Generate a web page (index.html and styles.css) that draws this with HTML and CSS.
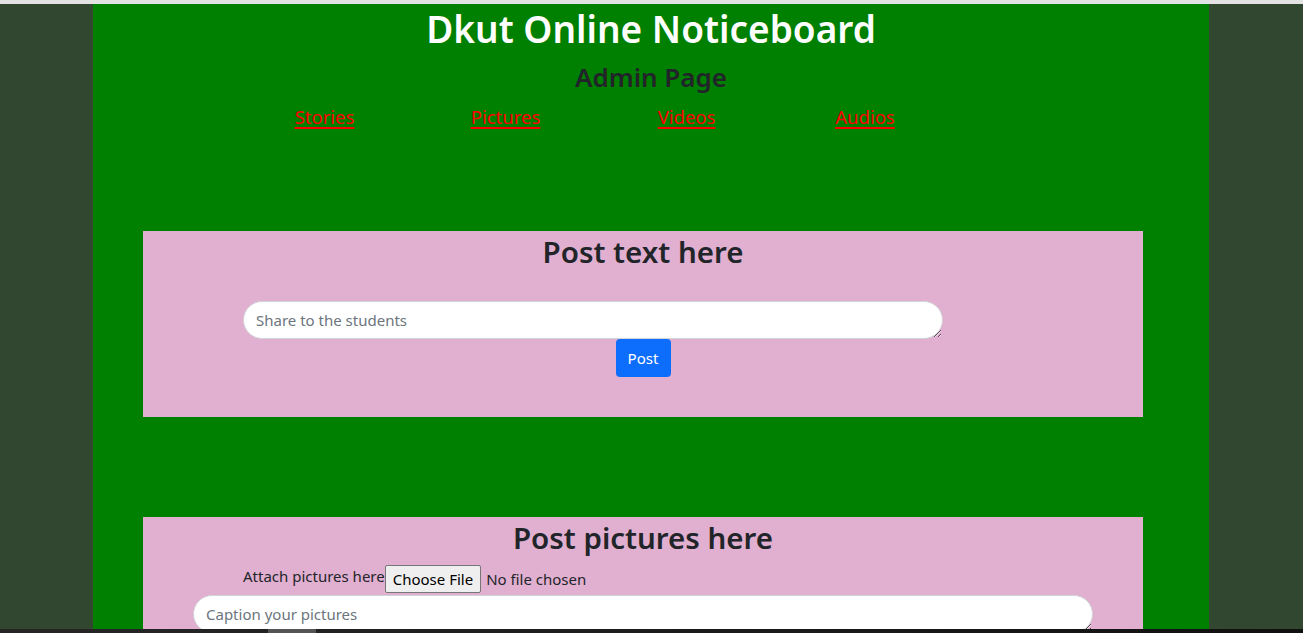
FILE: index.html
```html
<!DOCTYPE html>
<html lang="en">
<head>
<meta charset="utf-8">
<title>Dkut Online Noticeboard - Admin</title>
<link rel="stylesheet" href="styles.css">
</head>
<body>
<div class="topline"></div>
<div class="page">
  <header class="header">
    <h1 class="title">Dkut Online Noticeboard</h1>
    <h3 class="subtitle">Admin Page</h3>
    <nav class="nav">
      <a href="#" class="nav-link">Stories</a>
      <a href="#" class="nav-link">Pictures</a>
      <a href="#" class="nav-link">Videos</a>
      <a href="#" class="nav-link">Audios</a>
    </nav>
  </header>

  <section class="panel panel-text">
    <h2 class="panel-title">Post text here</h2>
    <form class="text-form">
      <textarea class="field field-text" rows="1" placeholder="Share to the students"></textarea>
      <button type="button" class="btn-post">Post</button>
    </form>
  </section>

  <section class="panel panel-pics">
    <h2 class="panel-title">Post pictures here</h2>
    <div class="attach-row">
      <label class="attach-label">Attach pictures here</label><input type="file" class="file-input">
    </div>
    <textarea class="field field-caption" rows="1" placeholder="Caption your pictures"></textarea>
  </section>
</div>
<div class="taskbar"><span class="taskbar-item"></span></div>
</body>
</html>
```

FILE: styles.css
```css
html, body {
  margin: 0;
  padding: 0;
  height: 100%;
  overflow: hidden;
}
body {
  background: #32472f;
  font-family: "Noto Sans", "Open Sans", sans-serif;
  color: #212529;
  position: relative;
}
.topline {
  height: 4px;
  background: #e3e3e3;
}
.page {
  width: 1116px;
  margin-left: 93px;
  background: #008000;
  min-height: 700px;
  padding-top: 1px;
}
.header {
  text-align: center;
  height: 226px;
}
.title {
  margin: 0;
  font-size: 37px;
  line-height: 48px;
  font-weight: 600;
  color: #ffffff;
}
.subtitle {
  margin: 7px 0 0;
  font-size: 26px;
  line-height: 34px;
  font-weight: 600;
  color: #212529;
}
.nav {
  display: grid;
  grid-template-columns: 181px 181px 181px 176px;
  margin: 10px 0 0 141px;
  text-align: center;
}
.nav-link {
  font-size: 18.5px;
  line-height: 26px;
  color: #ff0000;
  text-decoration: underline;
  text-decoration-thickness: 2px;
  text-underline-offset: 3px;
}
.panel {
  width: 1000px;
  margin-left: 50px;
  background: #e1afd0;
}
.panel-text {
  height: 186px;
  margin-bottom: 100px;
}
.panel-title {
  margin: 0;
  padding-top: 2px;
  text-align: center;
  font-size: 29.5px;
  line-height: 38px;
  font-weight: 600;
  color: #212529;
}
.text-form {
  display: flex;
  flex-direction: column;
  align-items: center;
  margin-top: 30px;
}
.field {
  display: block;
  box-sizing: border-box;
  height: 38px;
  padding: 8px 12px;
  border: 1px solid #d0d4d9;
  border-radius: 19px;
  background: #fff;
  font-family: inherit;
  font-size: 15px;
  line-height: 20px;
  color: #212529;
}
.field::placeholder {
  color: #6c757d;
}
.field-text {
  width: 700px;
  margin-left: -100px;
}
.btn-post {
  width: 55px;
  height: 38px;
  border: none;
  border-radius: 4px;
  background: #0d6efd;
  color: #fff;
  font-family: inherit;
  font-size: 15px;
  cursor: pointer;
}
.attach-row {
  display: flex;
  align-items: center;
  margin: 5px 0 0 100px;
  height: 33px;
}
.attach-label {
  font-size: 15px;
  color: #212529;
  align-self: flex-start;
  margin-top: 4px;
}
.file-input {
  font-family: inherit;
  font-size: 15px;
  color: #212529;
}
.file-input::file-selector-button {
  font-family: inherit;
  font-size: 15px;
  padding: 3px 7px;
  margin-right: 5px;
  border: 1px solid #767676;
  border-radius: 2px;
  background: #efefef;
  color: #000;
}
.field-caption {
  width: 900px;
  margin: 0 0 0 50px;
}
.taskbar {
  position: absolute;
  left: 0;
  right: 0;
  top: 629px;
  height: 4px;
  background: linear-gradient(to right, #262626 0%, #1e1e1e 40%, #101010 100%);
}
.taskbar-item {
  position: absolute;
  left: 268px;
  width: 48px;
  top: 0;
  height: 4px;
  background: #545454;
}
```
